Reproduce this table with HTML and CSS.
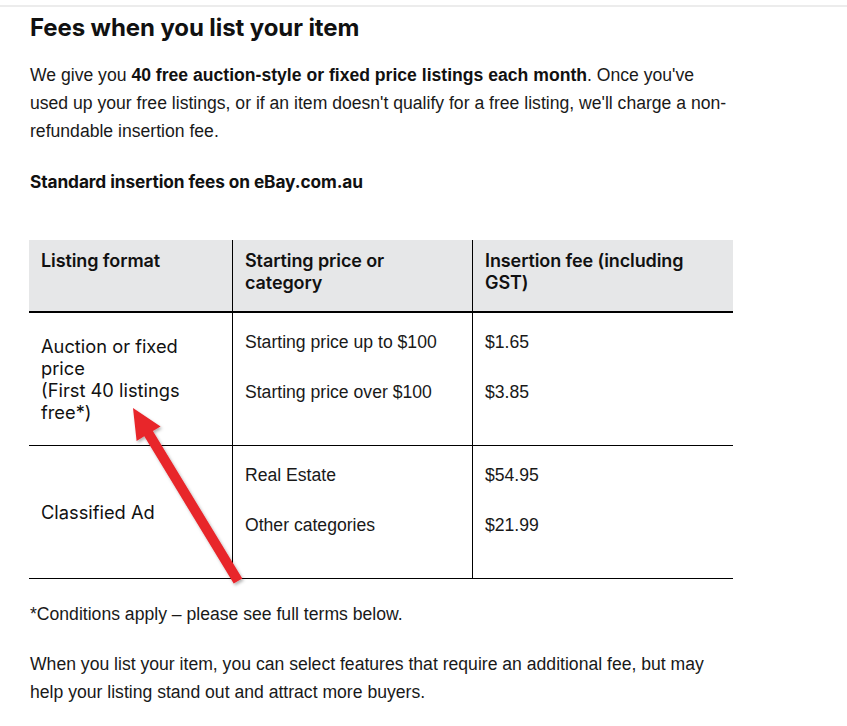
FILE: index.html
```html
<!DOCTYPE html>
<html lang="en">
<head>
<meta charset="utf-8">
<title>Fees when you list your item</title>
<link rel="stylesheet" href="styles.css">
</head>
<body>
<div class="topline"></div>
<main class="content">
  <h1 class="title">Fees when you list your item</h1>
  <p class="para">We give you <strong>40 free auction-style or fixed price listings each month</strong>. Once you've used up your free listings, or if an item doesn't qualify for a free listing, we'll charge a non-refundable insertion fee.</p>
  <p class="label">Standard insertion fees on eBay.com.au</p>
  <table class="fees">
    <thead>
      <tr>
        <th class="c1">Listing format</th>
        <th class="c2">Starting price or category</th>
        <th class="c3">Insertion fee (including GST)</th>
      </tr>
    </thead>
    <tbody>
      <tr>
        <td class="fmt">Auction or fixed price<br>(First 40 listings free*)</td>
        <td class="sub"><p>Starting price up to $100</p><p>Starting price over $100</p></td>
        <td class="sub"><p>$1.65</p><p>$3.85</p></td>
      </tr>
      <tr>
        <td class="fmt">Classified Ad</td>
        <td class="sub"><p>Real Estate</p><p>Other categories</p></td>
        <td class="sub"><p>$54.95</p><p>$21.99</p></td>
      </tr>
    </tbody>
  </table>
  <p class="note">*Conditions apply – please see full terms below.</p>
  <p class="para last">When you list your item, you can select features that require an additional fee, but may help your listing stand out and attract more buyers.</p>
</main>
<svg class="arrow" width="847" height="726" viewBox="0 0 847 726" aria-hidden="true">
  <defs>
    <filter id="sh" x="-20%" y="-20%" width="140%" height="140%">
      <feDropShadow dx="1.5" dy="2" stdDeviation="1.5" flood-color="#000" flood-opacity="0.3"/>
    </filter>
  </defs>
  <polygon filter="url(#sh)" fill="#e8262c" points="133,408 160.6,426.4 152.9,431.1 242.3,578.4 233.7,583.6 144.3,436.3 136.6,441"/>
</svg>
</body>
</html>
```
FILE: styles.css
```css
html, body {
  margin: 0;
  padding: 0;
  background: #ffffff;
}
body {
  position: relative;
  width: 847px;
  height: 726px;
  overflow: hidden;
  color: #111111;
  font-family: "Liberation Sans", Arial, sans-serif;
}
.topline {
  margin-top: 5px;
  height: 2px;
  background: #ececec;
}
.content {
  width: 705px;
  padding-left: 29px;
}
.title {
  margin: 7px 0 0 1px;
  font-family: Inter, "Liberation Sans", sans-serif;
  font-size: 24px;
  font-weight: 700;
  line-height: 28px;
  letter-spacing: -0.1px;
  color: #111111;
}
.para {
  margin: 19px 0 0 1px;
  font-size: 17.6px;
  line-height: 28px;
  color: #191919;
}
.para strong {
  font-weight: 700;
  color: #111111;
}
.label {
  margin: 23px 0 0 1px;
  font-family: Inter, "Liberation Sans", sans-serif;
  font-size: 17.3px;
  font-weight: 700;
  line-height: 28px;
  letter-spacing: -0.1px;
}
.fees {
  margin-top: 44px;
  width: 704px;
  border-collapse: collapse;
  table-layout: fixed;
}
.fees th {
  background: #e6e7e8;
  text-align: left;
  vertical-align: top;
  padding: 10px 12px 17px 12px;
  height: 44px;
  font-family: Inter, "Liberation Sans", sans-serif;
  font-size: 18px;
  font-weight: 600;
  line-height: 22px;
  letter-spacing: -0.1px;
  color: #111111;
  border-bottom: 2px solid #000000;
}
.fees .c1 { width: 179px; }
.fees .c2 { width: 215px; }
.fees th + th,
.fees td + td {
  border-left: 1px solid #000000;
}
.fees td {
  border-bottom: 1px solid #000000;
  padding: 0 12px;
  height: 133px;
  box-sizing: border-box;
}
.fees .fmt {
  vertical-align: middle;
  font-family: Inter, "Liberation Sans", sans-serif;
  font-size: 18.3px;
  line-height: 22px;
  letter-spacing: 0;
  color: #111111;
}
.fees .sub {
  vertical-align: top;
  padding-top: 18px;
  font-size: 17.6px;
  line-height: 22px;
  color: #191919;
}
.fees .sub p {
  margin: 0 0 28px 0;
}
.note {
  margin: 21px 0 0 1px;
  font-size: 17.6px;
  line-height: 28px;
  color: #191919;
}
.para.last {
  margin-top: 22px;
}
.arrow {
  position: absolute;
  left: 0;
  top: 0;
  pointer-events: none;
}
```
